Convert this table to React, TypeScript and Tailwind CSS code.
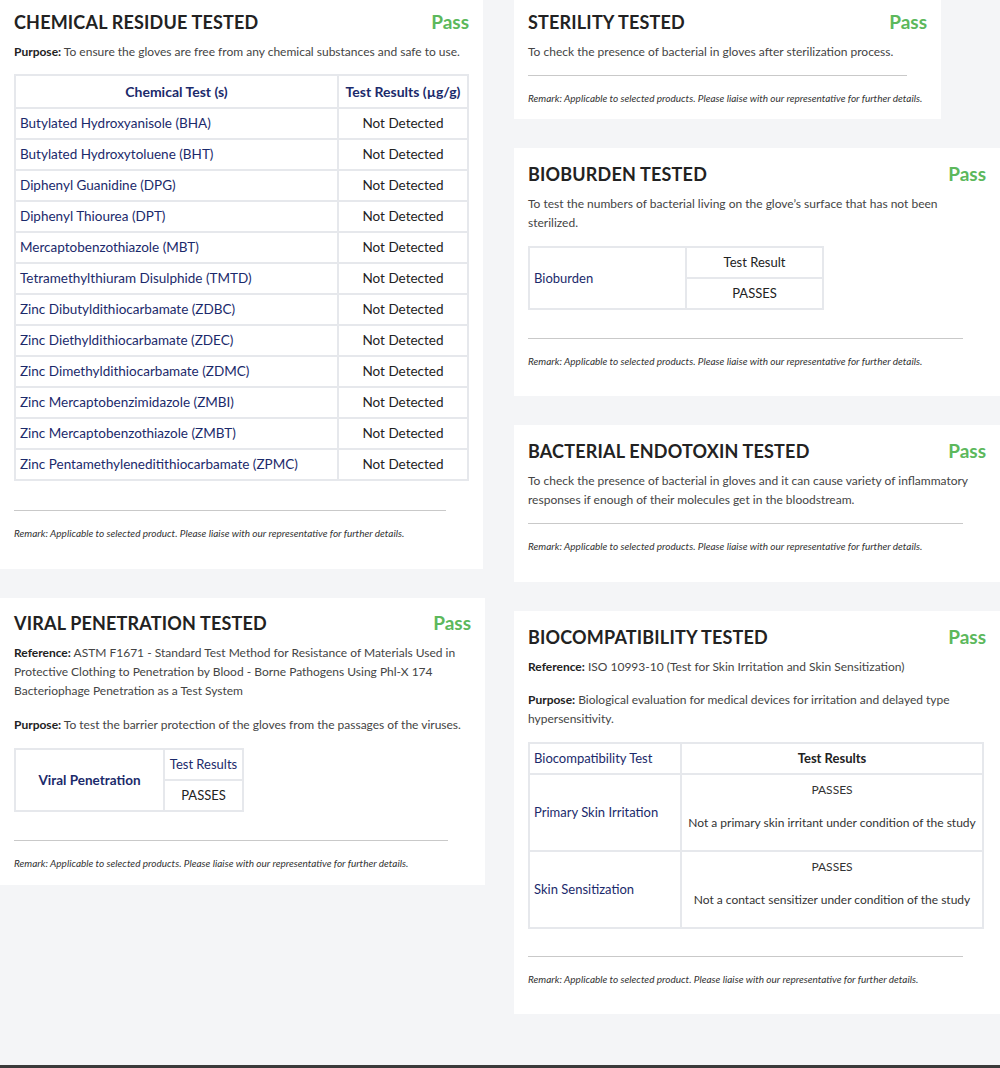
import type { ReactNode } from 'react';

const NAVY = 'text-[#1b2a6b]';

const chemicalTests = [
    'Butylated Hydroxyanisole (BHA)',
    'Butylated Hydroxytoluene (BHT)',
    'Diphenyl Guanidine (DPG)',
    'Diphenyl Thiourea (DPT)',
    'Mercaptobenzothiazole (MBT)',
    'Tetramethylthiuram Disulphide (TMTD)',
    'Zinc Dibutyldithiocarbamate (ZDBC)',
    'Zinc Diethyldithiocarbamate (ZDEC)',
    'Zinc Dimethyldithiocarbamate (ZDMC)',
    'Zinc Mercaptobenzimidazole (ZMBI)',
    'Zinc Mercaptobenzothiazole (ZMBT)',
    'Zinc Pentamethyleneditithiocarbamate (ZPMC)'
];

interface CardProps {
    title: string;
    className: string;
    children: ReactNode;
}

function Card({ title, className, children }: CardProps) {
    return (
        <section className={`bg-white px-[14px] ${className}`}>
            <div className="mb-[8px] flex items-center justify-between">
                <h2 className="text-[18px] font-bold uppercase leading-[24px] tracking-[0.01em] text-[#222]">
                    {title}
                </h2>
                <span className="text-[19px] font-bold leading-[24px] text-[#5cb85c]">Pass</span>
            </div>
            {children}
        </section>
    );
}

function Remark({ plural = true }: { plural?: boolean }) {
    return (
        <>
            <hr className="w-[95%] border-0 border-t border-[#c9c9c9]" />
            <p className="mt-[15px] text-[10px] italic leading-[15px] text-[#333]">
                Remark: Applicable to selected {plural ? 'products' : 'product'}. Please liaise with our representative for further details.
            </p>
        </>
    );
}

const text = 'text-[12px] leading-[19px]';
const cell = 'border-2 border-[#e6e8ec] px-[4px] leading-[19px]';

export default function App() {
    return (
        <div className="flex min-h-[1068px] flex-col bg-[#f4f5f7] font-['Lato','Noto_Sans',sans-serif] text-[#444]">
            <div className="flex flex-1 items-start gap-[29px]">
                <div className="flex w-[485px] flex-col gap-[29px]">
                    <Card title="Chemical Residue Tested" className="w-[483px] pb-[28px] pt-[10px]">
                        <p className={`mb-[13px] ${text}`}>
                            <b className="text-[#222]">Purpose:</b> To ensure the gloves are free from any chemical substances and safe to use.
                        </p>
                        <table className="mb-[29px] w-[455px] table-fixed border-collapse">
                            <colgroup>
                                <col className="w-[323px]" />
                                <col />
                            </colgroup>
                            <thead>
                                <tr>
                                    <th className={`${cell} py-[6px] text-center text-[14px] font-bold ${NAVY}`}>Chemical Test (s)</th>
                                    <th className={`${cell} py-[6px] text-center text-[14px] font-bold ${NAVY}`}>Test Results (µg/g)</th>
                                </tr>
                            </thead>
                            <tbody>
                                {chemicalTests.map(name => (
                                    <tr key={name}>
                                        <td className={`${cell} py-[5px] text-[13.5px] ${NAVY}`}>{name}</td>
                                        <td className={`${cell} py-[5px] text-center text-[13.5px] text-[#222]`}>Not Detected</td>
                                    </tr>
                                ))}
                            </tbody>
                        </table>
                        <Remark plural={false} />
                    </Card>

                    <Card title="Viral Penetration Tested" className="w-[485px] pb-[14px] pt-[13px]">
                        <p className={`mb-[15px] ${text}`}>
                            <b className="text-[#222]">Reference:</b> ASTM F1671 - Standard Test Method for Resistance of Materials Used in Protective Clothing to Penetration by Blood - Borne Pathogens Using Phl-X 174 Bacteriophage Penetration as a Test System
                        </p>
                        <p className={`mb-[14px] ${text}`}>
                            <b className="text-[#222]">Purpose:</b> To test the barrier protection of the gloves from the passages of the viruses.
                        </p>
                        <table className="mb-[28px] w-[230px] table-fixed border-collapse">
                            <colgroup>
                                <col className="w-[149px]" />
                                <col />
                            </colgroup>
                            <tbody>
                                <tr>
                                    <td rowSpan={2} className={`${cell} text-center text-[13.5px] font-bold ${NAVY}`}>Viral Penetration</td>
                                    <td className={`${cell} whitespace-nowrap py-[5px] text-center text-[13px] ${NAVY}`}>Test Results</td>
                                </tr>
                                <tr>
                                    <td className={`${cell} py-[5px] text-center text-[13px] text-[#222]`}>PASSES</td>
                                </tr>
                            </tbody>
                        </table>
                        <Remark />
                    </Card>
                </div>

                <div className="flex w-[486px] flex-col gap-[29px]">
                    <Card title="Sterility Tested" className="w-[427px] pb-[13px] pt-[10px]">
                        <p className={`mb-[14px] ${text}`}>
                            To check the presence of bacterial in gloves after sterilization process.
                        </p>
                        <Remark />
                    </Card>

                    <Card title="Bioburden Tested" className="w-[486px] pb-[27px] pt-[14px]">
                        <p className={`mb-[14px] ${text}`}>
                            To test the numbers of bacterial living on the glove’s surface that has not been sterilized.
                        </p>
                        <table className="mb-[28px] w-[296px] table-fixed border-collapse">
                            <colgroup>
                                <col className="w-[157px]" />
                                <col />
                            </colgroup>
                            <tbody>
                                <tr>
                                    <td rowSpan={2} className={`${cell} text-[13px] ${NAVY}`}>Bioburden</td>
                                    <td className={`${cell} py-[5px] text-center text-[13px] text-[#222]`}>Test Result</td>
                                </tr>
                                <tr>
                                    <td className={`${cell} py-[5px] text-center text-[13px] text-[#222]`}>PASSES</td>
                                </tr>
                            </tbody>
                        </table>
                        <Remark />
                    </Card>

                    <Card title="Bacterial Endotoxin Tested" className="w-[486px] pb-[28px] pt-[14px]">
                        <p className={`mb-[14px] ${text}`}>
                            To check the presence of bacterial in gloves and it can cause variety of inflammatory responses if enough of their molecules get in the bloodstream.
                        </p>
                        <Remark />
                    </Card>

                    <Card title="Biocompatibility Tested" className="w-[486px] pb-[27px] pt-[14px]">
                        <p className={`mb-[14px] ${text}`}>
                            <b className="text-[#222]">Reference:</b> ISO 10993-10 (Test for Skin Irritation and Skin Sensitization)
                        </p>
                        <p className={`mb-[14px] ${text}`}>
                            <b className="text-[#222]">Purpose:</b> Biological evaluation for medical devices for irritation and delayed type hypersensitivity.
                        </p>
                        <table className="mb-[27px] w-[456px] table-fixed border-collapse">
                            <colgroup>
                                <col className="w-[152px]" />
                                <col />
                            </colgroup>
                            <tbody>
                                <tr>
                                    <td className={`${cell} py-[5px] text-[13px] ${NAVY}`}>Biocompatibility Test</td>
                                    <td className={`${cell} py-[5px] text-center text-[13px] font-bold text-[#222]`}>Test Results</td>
                                </tr>
                                <tr>
                                    <td className={`${cell} text-[13px] ${NAVY}`}>Primary Skin Irritation</td>
                                    <td className={`${cell} py-[5px] text-center text-[#333]`}>
                                        <p className="mb-[14px] text-[12px]">PASSES</p>
                                        <p className="mb-[13px] text-[12px]">Not a primary skin irritant under condition of the study</p>
                                    </td>
                                </tr>
                                <tr>
                                    <td className={`${cell} text-[13px] ${NAVY}`}>Skin Sensitization</td>
                                    <td className={`${cell} py-[5px] text-center text-[#333]`}>
                                        <p className="mb-[14px] text-[12px]">PASSES</p>
                                        <p className="mb-[13px] text-[12px]">Not a contact sensitizer under condition of the study</p>
                                    </td>
                                </tr>
                            </tbody>
                        </table>
                        <Remark plural={false} />
                    </Card>
                </div>
            </div>
            <div className="h-[3px] bg-[#3a3a3a]" />
        </div>
    );
}
